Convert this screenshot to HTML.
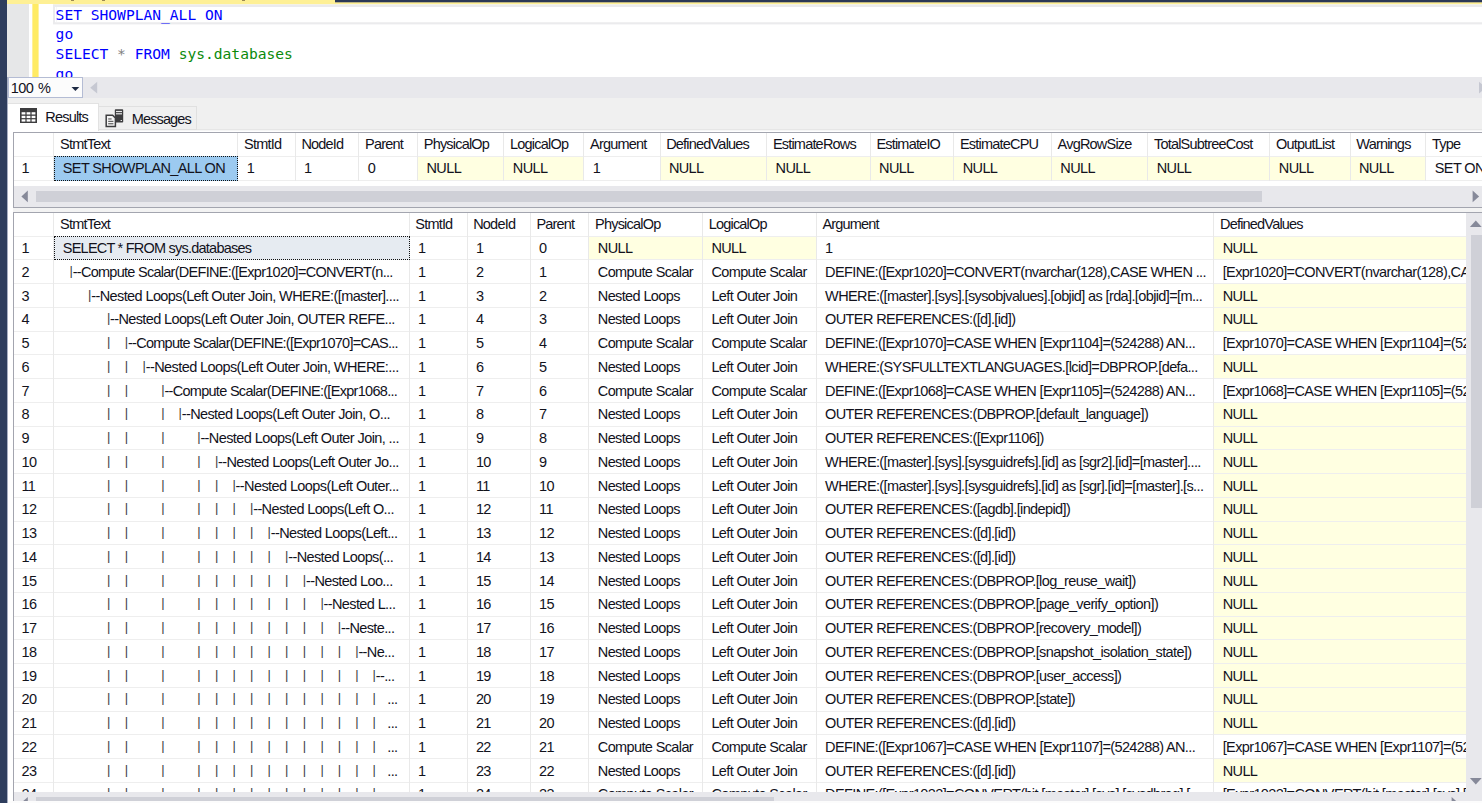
<!DOCTYPE html>
<html lang="en"><head><meta charset="utf-8"><title>SSMS - SHOWPLAN_ALL results</title>
<style>
html,body{margin:0;padding:0;}
body{width:1482px;height:803px;overflow:hidden;position:relative;background:#fff;
 font-family:"Liberation Sans",sans-serif;font-size:14.5px;letter-spacing:-0.62px;color:#12121c;}
div,span{position:absolute;box-sizing:border-box;white-space:pre;}
.navy{left:0;top:0;width:7px;height:803px;background:#2e3d5d;}
.navy2{left:7px;top:0;width:1px;height:803px;background:rgba(60,75,120,.45);}
.ytop{left:7px;top:0;width:1475px;height:4px;background:#fef095;}
.ntop{left:335px;top:0;width:1147px;height:3px;background:linear-gradient(#2b3856 0,#2b3856 2px,#bdb584 2px,#bdb584 3px);}
.ed{left:7px;top:4px;width:1475px;height:73px;background:#fff;overflow:hidden;}
.edm{left:0;top:0.3px;width:21.8px;height:100%;background:#e6e7e8;}
.edy{left:25px;top:0;width:7px;height:100%;background:linear-gradient(to right,#fff09a 0,#fff09a 1px,#ffeb64 1px,#ffeb64 6px,#fff2a2 6px);}
.cur{left:46px;top:0;width:1500px;height:21px;background:linear-gradient(#f4f2e4 0,#f4f2e4 1px,#ebebed 1px,#ebebed 3px,#fff 3px,#fff 18px,#f0f0f1 18px,#f0f0f1 19px,#ebebed 19px,#ebebed 20px,#f7f7f8 20px,#f7f7f8 21px);}
.cur i{position:absolute;left:3px;top:3px;width:1500px;height:15px;background:#fff;border-left:1px solid #f6f6f7;}
.cur b{position:absolute;left:0;top:1px;width:2px;height:19px;background:#ebebed;}
.code{left:48.6px;font-family:"DejaVu Sans Mono","Liberation Mono",monospace;font-size:14.6px;letter-spacing:0;line-height:20px;height:20px;color:#0000ff;}
.code .g{position:static;color:#808080;}
.code .s{position:static;color:#0a8a0a;}
.sb{background:#e8e8ec;}
.zoom{left:8px;top:77px;width:74.6px;height:20.6px;background:#fcfcfc;border:1px solid #b4bcd4;}
.zoom span{left:1.8px;top:1px;line-height:19.5px;font-size:14.5px;word-spacing:1.4px;}
.tri{width:0;height:0;border-style:solid;}
.bg{left:8px;top:98px;width:1474px;height:32px;background:#f0f0f0;}
.page{left:8px;top:130px;width:1474px;height:673px;background:#fff;}
.tabR{left:8px;top:103px;width:91px;height:28px;background:#fff;border:1px solid #e2e2e2;border-left:none;border-bottom:none;}
.tabM{left:98.3px;top:106.3px;width:98.5px;height:23.4px;background:#f0f0f0;border:1px solid #e0e0e0;}
.tabtxt{line-height:20px;height:20px;}
.grid{border:1px solid #a3a5af;background:#fff;overflow:hidden;}
.hl{height:1px;background:#eeeeee;left:0;width:1600px;}
.vl{width:1px;background:#e9e9e9;top:0;}
.h{line-height:23px;height:23px;top:0;letter-spacing:-0.8px;}
.c{line-height:24px;height:24px;}
.y{background:#ffffe1;}
.p{font-size:12.8px;color:#3a3a44;margin-top:-0.9px;}
</style></head><body>

<div class="navy"></div><div class="navy2"></div>
<div class="ytop"></div><div class="ntop"></div>
<div style="left:71px;top:0;width:3px;height:1px;background:rgba(90,70,40,.6)"></div>
<div style="left:102px;top:0;width:3px;height:1px;background:rgba(90,70,40,.6)"></div>
<div style="left:242px;top:0;width:3px;height:1px;background:rgba(90,70,40,.6)"></div>
<div class="ed"><div class="edm"></div><div class="edy"></div><div class="cur"><i></i><b></b></div>
<div class="code" style="top:0.6px">SET SHOWPLAN_ALL ON</div>
<div class="code" style="top:20.4px">go</div>
<div class="code" style="top:40.1px">SELECT <span class="g">*</span> FROM <span class="s">sys.databases</span></div>
<div class="code" style="top:59.9px">go</div>
</div>
<div class="sb" style="left:8px;top:77px;width:1474px;height:21px"></div>
<div class="zoom"><span>100 %</span></div><svg style="position:absolute;left:71px;top:87px" width="9" height="4"><polygon points="0.50,0.00 8.30,0.00 4.40,4.00" fill="#1e2a44"/></svg>
<svg style="position:absolute;left:90px;top:81px" width="8" height="13"><polygon points="7.20,0.80 7.20,12.50 0.20,6.65" fill="#c6c8d2"/></svg>
<svg style="position:absolute;left:1479px;top:81px" width="7" height="13"><polygon points="0.00,0.80 0.00,12.50 7.00,6.65" fill="#c6c8d2"/></svg>
<div class="bg"></div><div class="page"></div><div style="left:8px;top:129px;width:1474px;height:1px;background:#e6e6e6"></div><div style="left:8px;top:130px;width:1474px;height:1px;background:#f6f6f6"></div>
<div class="tabM"></div><div class="tabR"></div>
<svg style="position:absolute;left:20px;top:108px" width="17" height="15" viewBox="0 0 17 15">
<rect x="0" y="0" width="17" height="15" fill="#3d3d3f"/>
<g fill="#fff"><rect x="1.6" y="4.2" width="3.8" height="2.3"/><rect x="6.6" y="4.2" width="3.8" height="2.3"/><rect x="11.6" y="4.2" width="3.8" height="2.3"/>
<rect x="1.6" y="7.8" width="3.8" height="2.3"/><rect x="6.6" y="7.8" width="3.8" height="2.3"/><rect x="11.6" y="7.8" width="3.8" height="2.3"/>
<rect x="1.6" y="11.3" width="3.8" height="2.3"/><rect x="6.6" y="11.3" width="3.8" height="2.3"/><rect x="11.6" y="11.3" width="3.8" height="2.3"/></g></svg>
<span class="tabtxt" style="left:45.3px;top:107.2px;letter-spacing:-0.8px">Results</span>
<svg style="position:absolute;left:105px;top:109px" width="19" height="19" viewBox="0 0 19 19">
<rect x="9.8" y="0.3" width="8.4" height="13.2" rx="0.8" fill="#3d3d3f"/>
<rect x="11" y="1.9" width="6" height="1.2" fill="#e8e8e8"/><rect x="11" y="4.2" width="6" height="1.2" fill="#e8e8e8"/>
<rect x="15.6" y="11" width="1.4" height="1" fill="#e8e8e8"/>
<path d="M1.2 6.2 H7.6 L10.4 9 V17.6 H1.2 Z" fill="#f4f4f4" stroke="#3d3d3f" stroke-width="1.5"/>
<rect x="3.2" y="9.4" width="3.4" height="1.1" fill="#555"/><rect x="3.2" y="11.8" width="5.2" height="1.1" fill="#555"/><rect x="3.2" y="14.2" width="5.2" height="1.1" fill="#555"/></svg>
<span class="tabtxt" style="left:131.8px;top:109px;letter-spacing:-0.88px">Messages</span>
<div class="grid" style="left:13.2px;top:132px;width:1500px;height:76px">
<div class="y" style="left:404.0px;top:23.5px;width:85.3px;height:23.8px"></div>
<div class="y" style="left:490.3px;top:23.5px;width:79.0px;height:23.8px"></div>
<div class="y" style="left:646.4px;top:23.5px;width:105.7px;height:23.8px"></div>
<div class="y" style="left:753.1px;top:23.5px;width:102.5px;height:23.8px"></div>
<div class="y" style="left:856.6px;top:23.5px;width:82.6px;height:23.8px"></div>
<div class="y" style="left:940.2px;top:23.5px;width:96.6px;height:23.8px"></div>
<div class="y" style="left:1037.8px;top:23.5px;width:95.4px;height:23.8px"></div>
<div class="y" style="left:1134.2px;top:23.5px;width:121.1px;height:23.8px"></div>
<div class="y" style="left:1256.3px;top:23.5px;width:79.2px;height:23.8px"></div>
<div class="y" style="left:1336.5px;top:23.5px;width:74.8px;height:23.8px"></div>
<div class="hl" style="top:22.6px"></div>
<div class="hl" style="top:47.2px"></div>
<div class="vl" style="left:39.3px;height:47.7px"></div>
<div class="vl" style="left:223.3px;height:47.7px"></div>
<div class="vl" style="left:280.6px;height:47.7px"></div>
<div class="vl" style="left:344.3px;height:47.7px"></div>
<div class="vl" style="left:403.0px;height:47.7px"></div>
<div class="vl" style="left:489.3px;height:47.7px"></div>
<div class="vl" style="left:569.3px;height:47.7px"></div>
<div class="vl" style="left:645.4px;height:47.7px"></div>
<div class="vl" style="left:752.1px;height:47.7px"></div>
<div class="vl" style="left:855.6px;height:47.7px"></div>
<div class="vl" style="left:939.2px;height:47.7px"></div>
<div class="vl" style="left:1036.8px;height:47.7px"></div>
<div class="vl" style="left:1133.2px;height:47.7px"></div>
<div class="vl" style="left:1255.3px;height:47.7px"></div>
<div class="vl" style="left:1335.5px;height:47.7px"></div>
<div class="vl" style="left:1411.3px;height:47.7px"></div>
<div style="left:39.8px;top:22.6px;width:184.0px;height:25.2px;background:#9ccaf0;border:1px dotted #111"></div>
<span class="h" style="left:45.9px;top:0.3px">StmtText</span>
<span class="h" style="left:229.9px;top:0.3px">StmtId</span>
<span class="h" style="left:287.2px;top:0.3px">NodeId</span>
<span class="h" style="left:350.9px;top:0.3px">Parent</span>
<span class="h" style="left:409.6px;top:0.3px">PhysicalOp</span>
<span class="h" style="left:495.9px;top:0.3px">LogicalOp</span>
<span class="h" style="left:575.9px;top:0.3px">Argument</span>
<span class="h" style="left:652.0px;top:0.3px">DefinedValues</span>
<span class="h" style="left:758.7px;top:0.3px">EstimateRows</span>
<span class="h" style="left:862.2px;top:0.3px">EstimateIO</span>
<span class="h" style="left:945.8px;top:0.3px">EstimateCPU</span>
<span class="h" style="left:1043.4px;top:0.3px">AvgRowSize</span>
<span class="h" style="left:1139.8px;top:0.3px">TotalSubtreeCost</span>
<span class="h" style="left:1261.9px;top:0.3px">OutputList</span>
<span class="h" style="left:1342.1px;top:0.3px">Warnings</span>
<span class="h" style="left:1417.9px;top:0.3px">Type</span>
<span class="c" style="left:7.3px;top:23.0px">1</span>
<span class="c" style="left:48.6px;top:23.0px">SET SHOWPLAN_ALL ON</span>
<span class="c" style="left:232.6px;top:23.0px">1</span>
<span class="c" style="left:289.9px;top:23.0px">1</span>
<span class="c" style="left:353.6px;top:23.0px">0</span>
<span class="c" style="left:412.3px;top:23.0px">NULL</span>
<span class="c" style="left:498.6px;top:23.0px">NULL</span>
<span class="c" style="left:578.6px;top:23.0px">1</span>
<span class="c" style="left:654.7px;top:23.0px">NULL</span>
<span class="c" style="left:761.4px;top:23.0px">NULL</span>
<span class="c" style="left:864.9px;top:23.0px">NULL</span>
<span class="c" style="left:948.5px;top:23.0px">NULL</span>
<span class="c" style="left:1046.1px;top:23.0px">NULL</span>
<span class="c" style="left:1142.5px;top:23.0px">NULL</span>
<span class="c" style="left:1264.6px;top:23.0px">NULL</span>
<span class="c" style="left:1344.8px;top:23.0px">NULL</span>
<span class="c" style="left:1420.6px;top:23.0px">SET ON</span>
<div class="sb" style="left:0;top:53.0px;width:1600px;height:21px"></div>
<svg style="position:absolute;left:7px;top:57px" width="7" height="13"><polygon points="6.80,0.60 6.80,12.20 0.40,6.40" fill="#868999"/></svg>
<div style="left:21.4px;top:58.0px;width:1226.0px;height:10.6px;background:#cfd0d7"></div>
<svg style="position:absolute;left:1458px;top:57px" width="8" height="13"><polygon points="0.60,0.60 0.60,12.20 7.10,6.40" fill="#868999"/></svg>
</div>
<div style="left:13.2px;top:208px;width:1500px;height:4px;background:#f3f3f3"></div>
<div class="grid" style="left:13.2px;top:212px;width:1500px;height:620px">
<div class="y" style="left:575.3px;top:23.50px;width:112.6px;height:23.35px"></div>
<div class="y" style="left:688.9px;top:23.50px;width:112.7px;height:23.35px"></div>
<div class="y" style="left:1200.2px;top:23.50px;width:485.6px;height:23.35px"></div>
<div class="y" style="left:1200.2px;top:71.00px;width:485.6px;height:23.35px"></div>
<div class="y" style="left:1200.2px;top:94.75px;width:485.6px;height:23.35px"></div>
<div class="y" style="left:1200.2px;top:142.25px;width:485.6px;height:23.35px"></div>
<div class="y" style="left:1200.2px;top:189.75px;width:485.6px;height:23.35px"></div>
<div class="y" style="left:1200.2px;top:213.50px;width:485.6px;height:23.35px"></div>
<div class="y" style="left:1200.2px;top:237.25px;width:485.6px;height:23.35px"></div>
<div class="y" style="left:1200.2px;top:261.00px;width:485.6px;height:23.35px"></div>
<div class="y" style="left:1200.2px;top:284.75px;width:485.6px;height:23.35px"></div>
<div class="y" style="left:1200.2px;top:308.50px;width:485.6px;height:23.35px"></div>
<div class="y" style="left:1200.2px;top:332.25px;width:485.6px;height:23.35px"></div>
<div class="y" style="left:1200.2px;top:356.00px;width:485.6px;height:23.35px"></div>
<div class="y" style="left:1200.2px;top:379.75px;width:485.6px;height:23.35px"></div>
<div class="y" style="left:1200.2px;top:403.50px;width:485.6px;height:23.35px"></div>
<div class="y" style="left:1200.2px;top:427.25px;width:485.6px;height:23.35px"></div>
<div class="y" style="left:1200.2px;top:451.00px;width:485.6px;height:23.35px"></div>
<div class="y" style="left:1200.2px;top:474.75px;width:485.6px;height:23.35px"></div>
<div class="y" style="left:1200.2px;top:498.50px;width:485.6px;height:23.35px"></div>
<div class="y" style="left:1200.2px;top:546.00px;width:485.6px;height:23.35px"></div>
<div class="hl" style="top:22.5px"></div>
<div class="hl" style="top:46.35px"></div>
<div class="hl" style="top:70.10px"></div>
<div class="hl" style="top:93.85px"></div>
<div class="hl" style="top:117.60px"></div>
<div class="hl" style="top:141.35px"></div>
<div class="hl" style="top:165.10px"></div>
<div class="hl" style="top:188.85px"></div>
<div class="hl" style="top:212.60px"></div>
<div class="hl" style="top:236.35px"></div>
<div class="hl" style="top:260.10px"></div>
<div class="hl" style="top:283.85px"></div>
<div class="hl" style="top:307.60px"></div>
<div class="hl" style="top:331.35px"></div>
<div class="hl" style="top:355.10px"></div>
<div class="hl" style="top:378.85px"></div>
<div class="hl" style="top:402.60px"></div>
<div class="hl" style="top:426.35px"></div>
<div class="hl" style="top:450.10px"></div>
<div class="hl" style="top:473.85px"></div>
<div class="hl" style="top:497.60px"></div>
<div class="hl" style="top:521.35px"></div>
<div class="hl" style="top:545.10px"></div>
<div class="hl" style="top:568.85px"></div>
<div class="hl" style="top:592.60px"></div>
<div class="vl" style="left:39.3px;height:700px"></div>
<div class="vl" style="left:394.5px;height:700px"></div>
<div class="vl" style="left:452.4px;height:700px"></div>
<div class="vl" style="left:515.6px;height:700px"></div>
<div class="vl" style="left:574.3px;height:700px"></div>
<div class="vl" style="left:687.9px;height:700px"></div>
<div class="vl" style="left:801.6px;height:700px"></div>
<div class="vl" style="left:1199.2px;height:700px"></div>
<div style="left:39.8px;top:22.8px;width:355.6px;height:24.7px;background:#e6ebf1;border:1px dotted #111"></div>
<span class="h" style="left:45.9px;top:0.3px">StmtText</span>
<span class="h" style="left:401.1px;top:0.3px">StmtId</span>
<span class="h" style="left:459.0px;top:0.3px">NodeId</span>
<span class="h" style="left:522.2px;top:0.3px">Parent</span>
<span class="h" style="left:580.9px;top:0.3px">PhysicalOp</span>
<span class="h" style="left:694.5px;top:0.3px">LogicalOp</span>
<span class="h" style="left:808.2px;top:0.3px">Argument</span>
<span class="h" style="left:1205.8px;top:0.3px">DefinedValues</span>
<span class="c" style="left:7.3px;top:23.00px">1</span>
<span class="c" style="left:48.6px;top:23.00px;letter-spacing:-0.77px">SELECT * FROM sys.databases</span>
<span class="c" style="left:403.8px;top:23.00px">1</span>
<span class="c" style="left:461.7px;top:23.00px">1</span>
<span class="c" style="left:524.9px;top:23.00px">0</span>
<span class="c" style="left:583.6px;top:23.00px">NULL</span>
<span class="c" style="left:697.2px;top:23.00px">NULL</span>
<span class="c" style="left:810.9px;top:23.00px">1</span>
<span class="c" style="left:1208.5px;top:23.00px">NULL</span>
<span class="c" style="left:7.3px;top:46.75px">2</span>
<span class="c p" style="left:55.3px;top:46.75px">|</span>
<span class="c" style="left:58.5px;top:46.75px;letter-spacing:-0.725px">--Compute Scalar(DEFINE:([Expr1020]=CONVERT(n...</span>
<span class="c" style="left:403.8px;top:46.75px">1</span>
<span class="c" style="left:461.7px;top:46.75px">2</span>
<span class="c" style="left:524.9px;top:46.75px">1</span>
<span class="c" style="left:583.6px;top:46.75px">Compute Scalar</span>
<span class="c" style="left:697.2px;top:46.75px">Compute Scalar</span>
<span class="c" style="left:810.9px;top:46.75px">DEFINE:([Expr1020]=CONVERT(nvarchar(128),CASE WHEN ...</span>
<span class="c" style="left:1208.5px;top:46.75px">[Expr1020]=CONVERT(nvarchar(128),CASE WHEN</span>
<span class="c" style="left:7.3px;top:70.50px">3</span>
<span class="c p" style="left:73.8px;top:70.50px">|</span>
<span class="c" style="left:77.0px;top:70.50px;letter-spacing:-0.600px">--Nested Loops(Left Outer Join, WHERE:([master]....</span>
<span class="c" style="left:403.8px;top:70.50px">1</span>
<span class="c" style="left:461.7px;top:70.50px">3</span>
<span class="c" style="left:524.9px;top:70.50px">2</span>
<span class="c" style="left:583.6px;top:70.50px">Nested Loops</span>
<span class="c" style="left:697.2px;top:70.50px">Left Outer Join</span>
<span class="c" style="left:810.9px;top:70.50px">WHERE:([master].[sys].[sysobjvalues].[objid] as [rda].[objid]=[m...</span>
<span class="c" style="left:1208.5px;top:70.50px">NULL</span>
<span class="c" style="left:7.3px;top:94.25px">4</span>
<span class="c p" style="left:92.7px;top:94.25px">|</span>
<span class="c" style="left:95.8px;top:94.25px;letter-spacing:-0.620px">--Nested Loops(Left Outer Join, OUTER REFE...</span>
<span class="c" style="left:403.8px;top:94.25px">1</span>
<span class="c" style="left:461.7px;top:94.25px">4</span>
<span class="c" style="left:524.9px;top:94.25px">3</span>
<span class="c" style="left:583.6px;top:94.25px">Nested Loops</span>
<span class="c" style="left:697.2px;top:94.25px">Left Outer Join</span>
<span class="c" style="left:810.9px;top:94.25px">OUTER REFERENCES:([d].[id])</span>
<span class="c" style="left:1208.5px;top:94.25px">NULL</span>
<span class="c" style="left:7.3px;top:118.00px">5</span>
<span class="c p" style="left:92.7px;top:118.00px">|</span>
<span class="c p" style="left:110.6px;top:118.00px">|</span>
<span class="c" style="left:113.8px;top:118.00px;letter-spacing:-0.740px">--Compute Scalar(DEFINE:([Expr1070]=CAS...</span>
<span class="c" style="left:403.8px;top:118.00px">1</span>
<span class="c" style="left:461.7px;top:118.00px">5</span>
<span class="c" style="left:524.9px;top:118.00px">4</span>
<span class="c" style="left:583.6px;top:118.00px">Compute Scalar</span>
<span class="c" style="left:697.2px;top:118.00px">Compute Scalar</span>
<span class="c" style="left:810.9px;top:118.00px">DEFINE:([Expr1070]=CASE WHEN [Expr1104]=(524288) AN...</span>
<span class="c" style="left:1208.5px;top:118.00px">[Expr1070]=CASE WHEN [Expr1104]=(524288)</span>
<span class="c" style="left:7.3px;top:141.75px">6</span>
<span class="c p" style="left:92.7px;top:141.75px">|</span>
<span class="c p" style="left:110.6px;top:141.75px">|</span>
<span class="c p" style="left:128.4px;top:141.75px">|</span>
<span class="c" style="left:131.6px;top:141.75px;letter-spacing:-0.595px">--Nested Loops(Left Outer Join, WHERE:...</span>
<span class="c" style="left:403.8px;top:141.75px">1</span>
<span class="c" style="left:461.7px;top:141.75px">6</span>
<span class="c" style="left:524.9px;top:141.75px">5</span>
<span class="c" style="left:583.6px;top:141.75px">Nested Loops</span>
<span class="c" style="left:697.2px;top:141.75px">Left Outer Join</span>
<span class="c" style="left:810.9px;top:141.75px">WHERE:(SYSFULLTEXTLANGUAGES.[lcid]=DBPROP.[defa...</span>
<span class="c" style="left:1208.5px;top:141.75px">NULL</span>
<span class="c" style="left:7.3px;top:165.50px">7</span>
<span class="c p" style="left:92.7px;top:165.50px">|</span>
<span class="c p" style="left:110.6px;top:165.50px">|</span>
<span class="c p" style="left:147.0px;top:165.50px">|</span>
<span class="c" style="left:150.2px;top:165.50px;letter-spacing:-0.700px">--Compute Scalar(DEFINE:([Expr1068...</span>
<span class="c" style="left:403.8px;top:165.50px">1</span>
<span class="c" style="left:461.7px;top:165.50px">7</span>
<span class="c" style="left:524.9px;top:165.50px">6</span>
<span class="c" style="left:583.6px;top:165.50px">Compute Scalar</span>
<span class="c" style="left:697.2px;top:165.50px">Compute Scalar</span>
<span class="c" style="left:810.9px;top:165.50px">DEFINE:([Expr1068]=CASE WHEN [Expr1105]=(524288) AN...</span>
<span class="c" style="left:1208.5px;top:165.50px">[Expr1068]=CASE WHEN [Expr1105]=(524288)</span>
<span class="c" style="left:7.3px;top:189.25px">8</span>
<span class="c p" style="left:92.7px;top:189.25px">|</span>
<span class="c p" style="left:110.6px;top:189.25px">|</span>
<span class="c p" style="left:147.0px;top:189.25px">|</span>
<span class="c p" style="left:164.4px;top:189.25px">|</span>
<span class="c" style="left:167.6px;top:189.25px;letter-spacing:-0.620px">--Nested Loops(Left Outer Join, O...</span>
<span class="c" style="left:403.8px;top:189.25px">1</span>
<span class="c" style="left:461.7px;top:189.25px">8</span>
<span class="c" style="left:524.9px;top:189.25px">7</span>
<span class="c" style="left:583.6px;top:189.25px">Nested Loops</span>
<span class="c" style="left:697.2px;top:189.25px">Left Outer Join</span>
<span class="c" style="left:810.9px;top:189.25px">OUTER REFERENCES:(DBPROP.[default_language])</span>
<span class="c" style="left:1208.5px;top:189.25px">NULL</span>
<span class="c" style="left:7.3px;top:213.00px">9</span>
<span class="c p" style="left:92.7px;top:213.00px">|</span>
<span class="c p" style="left:110.6px;top:213.00px">|</span>
<span class="c p" style="left:147.0px;top:213.00px">|</span>
<span class="c p" style="left:183.1px;top:213.00px">|</span>
<span class="c" style="left:186.2px;top:213.00px;letter-spacing:-0.590px">--Nested Loops(Left Outer Join, ...</span>
<span class="c" style="left:403.8px;top:213.00px">1</span>
<span class="c" style="left:461.7px;top:213.00px">9</span>
<span class="c" style="left:524.9px;top:213.00px">8</span>
<span class="c" style="left:583.6px;top:213.00px">Nested Loops</span>
<span class="c" style="left:697.2px;top:213.00px">Left Outer Join</span>
<span class="c" style="left:810.9px;top:213.00px">OUTER REFERENCES:([Expr1106])</span>
<span class="c" style="left:1208.5px;top:213.00px">NULL</span>
<span class="c" style="left:7.3px;top:236.75px">10</span>
<span class="c p" style="left:92.7px;top:236.75px">|</span>
<span class="c p" style="left:110.6px;top:236.75px">|</span>
<span class="c p" style="left:147.0px;top:236.75px">|</span>
<span class="c p" style="left:183.1px;top:236.75px">|</span>
<span class="c p" style="left:200.7px;top:236.75px">|</span>
<span class="c" style="left:203.9px;top:236.75px;letter-spacing:-0.620px">--Nested Loops(Left Outer Jo...</span>
<span class="c" style="left:403.8px;top:236.75px">1</span>
<span class="c" style="left:461.7px;top:236.75px">10</span>
<span class="c" style="left:524.9px;top:236.75px">9</span>
<span class="c" style="left:583.6px;top:236.75px">Nested Loops</span>
<span class="c" style="left:697.2px;top:236.75px">Left Outer Join</span>
<span class="c" style="left:810.9px;top:236.75px">WHERE:([master].[sys].[sysguidrefs].[id] as [sgr2].[id]=[master]....</span>
<span class="c" style="left:1208.5px;top:236.75px">NULL</span>
<span class="c" style="left:7.3px;top:260.50px">11</span>
<span class="c p" style="left:92.7px;top:260.50px">|</span>
<span class="c p" style="left:110.6px;top:260.50px">|</span>
<span class="c p" style="left:147.0px;top:260.50px">|</span>
<span class="c p" style="left:183.1px;top:260.50px">|</span>
<span class="c p" style="left:200.7px;top:260.50px">|</span>
<span class="c p" style="left:218.2px;top:260.50px">|</span>
<span class="c" style="left:221.4px;top:260.50px;letter-spacing:-0.590px">--Nested Loops(Left Outer...</span>
<span class="c" style="left:403.8px;top:260.50px">1</span>
<span class="c" style="left:461.7px;top:260.50px">11</span>
<span class="c" style="left:524.9px;top:260.50px">10</span>
<span class="c" style="left:583.6px;top:260.50px">Nested Loops</span>
<span class="c" style="left:697.2px;top:260.50px">Left Outer Join</span>
<span class="c" style="left:810.9px;top:260.50px">WHERE:([master].[sys].[sysguidrefs].[id] as [sgr].[id]=[master].[s...</span>
<span class="c" style="left:1208.5px;top:260.50px">NULL</span>
<span class="c" style="left:7.3px;top:284.25px">12</span>
<span class="c p" style="left:92.7px;top:284.25px">|</span>
<span class="c p" style="left:110.6px;top:284.25px">|</span>
<span class="c p" style="left:147.0px;top:284.25px">|</span>
<span class="c p" style="left:183.1px;top:284.25px">|</span>
<span class="c p" style="left:200.7px;top:284.25px">|</span>
<span class="c p" style="left:218.2px;top:284.25px">|</span>
<span class="c p" style="left:235.8px;top:284.25px">|</span>
<span class="c" style="left:239.0px;top:284.25px;letter-spacing:-0.620px">--Nested Loops(Left O...</span>
<span class="c" style="left:403.8px;top:284.25px">1</span>
<span class="c" style="left:461.7px;top:284.25px">12</span>
<span class="c" style="left:524.9px;top:284.25px">11</span>
<span class="c" style="left:583.6px;top:284.25px">Nested Loops</span>
<span class="c" style="left:697.2px;top:284.25px">Left Outer Join</span>
<span class="c" style="left:810.9px;top:284.25px">OUTER REFERENCES:([agdb].[indepid])</span>
<span class="c" style="left:1208.5px;top:284.25px">NULL</span>
<span class="c" style="left:7.3px;top:308.00px">13</span>
<span class="c p" style="left:92.7px;top:308.00px">|</span>
<span class="c p" style="left:110.6px;top:308.00px">|</span>
<span class="c p" style="left:147.0px;top:308.00px">|</span>
<span class="c p" style="left:183.1px;top:308.00px">|</span>
<span class="c p" style="left:200.7px;top:308.00px">|</span>
<span class="c p" style="left:218.2px;top:308.00px">|</span>
<span class="c p" style="left:235.8px;top:308.00px">|</span>
<span class="c p" style="left:253.4px;top:308.00px">|</span>
<span class="c" style="left:256.6px;top:308.00px;letter-spacing:-0.620px">--Nested Loops(Left...</span>
<span class="c" style="left:403.8px;top:308.00px">1</span>
<span class="c" style="left:461.7px;top:308.00px">13</span>
<span class="c" style="left:524.9px;top:308.00px">12</span>
<span class="c" style="left:583.6px;top:308.00px">Nested Loops</span>
<span class="c" style="left:697.2px;top:308.00px">Left Outer Join</span>
<span class="c" style="left:810.9px;top:308.00px">OUTER REFERENCES:([d].[id])</span>
<span class="c" style="left:1208.5px;top:308.00px">NULL</span>
<span class="c" style="left:7.3px;top:331.75px">14</span>
<span class="c p" style="left:92.7px;top:331.75px">|</span>
<span class="c p" style="left:110.6px;top:331.75px">|</span>
<span class="c p" style="left:147.0px;top:331.75px">|</span>
<span class="c p" style="left:183.1px;top:331.75px">|</span>
<span class="c p" style="left:200.7px;top:331.75px">|</span>
<span class="c p" style="left:218.2px;top:331.75px">|</span>
<span class="c p" style="left:235.8px;top:331.75px">|</span>
<span class="c p" style="left:253.4px;top:331.75px">|</span>
<span class="c p" style="left:270.9px;top:331.75px">|</span>
<span class="c" style="left:274.1px;top:331.75px;letter-spacing:-0.620px">--Nested Loops(...</span>
<span class="c" style="left:403.8px;top:331.75px">1</span>
<span class="c" style="left:461.7px;top:331.75px">14</span>
<span class="c" style="left:524.9px;top:331.75px">13</span>
<span class="c" style="left:583.6px;top:331.75px">Nested Loops</span>
<span class="c" style="left:697.2px;top:331.75px">Left Outer Join</span>
<span class="c" style="left:810.9px;top:331.75px">OUTER REFERENCES:([d].[id])</span>
<span class="c" style="left:1208.5px;top:331.75px">NULL</span>
<span class="c" style="left:7.3px;top:355.50px">15</span>
<span class="c p" style="left:92.7px;top:355.50px">|</span>
<span class="c p" style="left:110.6px;top:355.50px">|</span>
<span class="c p" style="left:147.0px;top:355.50px">|</span>
<span class="c p" style="left:183.1px;top:355.50px">|</span>
<span class="c p" style="left:200.7px;top:355.50px">|</span>
<span class="c p" style="left:218.2px;top:355.50px">|</span>
<span class="c p" style="left:235.8px;top:355.50px">|</span>
<span class="c p" style="left:253.4px;top:355.50px">|</span>
<span class="c p" style="left:270.9px;top:355.50px">|</span>
<span class="c p" style="left:288.6px;top:355.50px">|</span>
<span class="c" style="left:291.8px;top:355.50px;letter-spacing:-0.620px">--Nested Loo...</span>
<span class="c" style="left:403.8px;top:355.50px">1</span>
<span class="c" style="left:461.7px;top:355.50px">15</span>
<span class="c" style="left:524.9px;top:355.50px">14</span>
<span class="c" style="left:583.6px;top:355.50px">Nested Loops</span>
<span class="c" style="left:697.2px;top:355.50px">Left Outer Join</span>
<span class="c" style="left:810.9px;top:355.50px">OUTER REFERENCES:(DBPROP.[log_reuse_wait])</span>
<span class="c" style="left:1208.5px;top:355.50px">NULL</span>
<span class="c" style="left:7.3px;top:379.25px">16</span>
<span class="c p" style="left:92.7px;top:379.25px">|</span>
<span class="c p" style="left:110.6px;top:379.25px">|</span>
<span class="c p" style="left:147.0px;top:379.25px">|</span>
<span class="c p" style="left:183.1px;top:379.25px">|</span>
<span class="c p" style="left:200.7px;top:379.25px">|</span>
<span class="c p" style="left:218.2px;top:379.25px">|</span>
<span class="c p" style="left:235.8px;top:379.25px">|</span>
<span class="c p" style="left:253.4px;top:379.25px">|</span>
<span class="c p" style="left:270.9px;top:379.25px">|</span>
<span class="c p" style="left:288.6px;top:379.25px">|</span>
<span class="c p" style="left:306.2px;top:379.25px">|</span>
<span class="c" style="left:309.4px;top:379.25px;letter-spacing:-0.620px">--Nested L...</span>
<span class="c" style="left:403.8px;top:379.25px">1</span>
<span class="c" style="left:461.7px;top:379.25px">16</span>
<span class="c" style="left:524.9px;top:379.25px">15</span>
<span class="c" style="left:583.6px;top:379.25px">Nested Loops</span>
<span class="c" style="left:697.2px;top:379.25px">Left Outer Join</span>
<span class="c" style="left:810.9px;top:379.25px">OUTER REFERENCES:(DBPROP.[page_verify_option])</span>
<span class="c" style="left:1208.5px;top:379.25px">NULL</span>
<span class="c" style="left:7.3px;top:403.00px">17</span>
<span class="c p" style="left:92.7px;top:403.00px">|</span>
<span class="c p" style="left:110.6px;top:403.00px">|</span>
<span class="c p" style="left:147.0px;top:403.00px">|</span>
<span class="c p" style="left:183.1px;top:403.00px">|</span>
<span class="c p" style="left:200.7px;top:403.00px">|</span>
<span class="c p" style="left:218.2px;top:403.00px">|</span>
<span class="c p" style="left:235.8px;top:403.00px">|</span>
<span class="c p" style="left:253.4px;top:403.00px">|</span>
<span class="c p" style="left:270.9px;top:403.00px">|</span>
<span class="c p" style="left:288.6px;top:403.00px">|</span>
<span class="c p" style="left:306.2px;top:403.00px">|</span>
<span class="c p" style="left:323.6px;top:403.00px">|</span>
<span class="c" style="left:326.8px;top:403.00px;letter-spacing:-0.620px">--Neste...</span>
<span class="c" style="left:403.8px;top:403.00px">1</span>
<span class="c" style="left:461.7px;top:403.00px">17</span>
<span class="c" style="left:524.9px;top:403.00px">16</span>
<span class="c" style="left:583.6px;top:403.00px">Nested Loops</span>
<span class="c" style="left:697.2px;top:403.00px">Left Outer Join</span>
<span class="c" style="left:810.9px;top:403.00px">OUTER REFERENCES:(DBPROP.[recovery_model])</span>
<span class="c" style="left:1208.5px;top:403.00px">NULL</span>
<span class="c" style="left:7.3px;top:426.75px">18</span>
<span class="c p" style="left:92.7px;top:426.75px">|</span>
<span class="c p" style="left:110.6px;top:426.75px">|</span>
<span class="c p" style="left:147.0px;top:426.75px">|</span>
<span class="c p" style="left:183.1px;top:426.75px">|</span>
<span class="c p" style="left:200.7px;top:426.75px">|</span>
<span class="c p" style="left:218.2px;top:426.75px">|</span>
<span class="c p" style="left:235.8px;top:426.75px">|</span>
<span class="c p" style="left:253.4px;top:426.75px">|</span>
<span class="c p" style="left:270.9px;top:426.75px">|</span>
<span class="c p" style="left:288.6px;top:426.75px">|</span>
<span class="c p" style="left:306.2px;top:426.75px">|</span>
<span class="c p" style="left:323.6px;top:426.75px">|</span>
<span class="c p" style="left:341.1px;top:426.75px">|</span>
<span class="c" style="left:344.2px;top:426.75px;letter-spacing:-0.620px">--Ne...</span>
<span class="c" style="left:403.8px;top:426.75px">1</span>
<span class="c" style="left:461.7px;top:426.75px">18</span>
<span class="c" style="left:524.9px;top:426.75px">17</span>
<span class="c" style="left:583.6px;top:426.75px">Nested Loops</span>
<span class="c" style="left:697.2px;top:426.75px">Left Outer Join</span>
<span class="c" style="left:810.9px;top:426.75px">OUTER REFERENCES:(DBPROP.[snapshot_isolation_state])</span>
<span class="c" style="left:1208.5px;top:426.75px">NULL</span>
<span class="c" style="left:7.3px;top:450.50px">19</span>
<span class="c p" style="left:92.7px;top:450.50px">|</span>
<span class="c p" style="left:110.6px;top:450.50px">|</span>
<span class="c p" style="left:147.0px;top:450.50px">|</span>
<span class="c p" style="left:183.1px;top:450.50px">|</span>
<span class="c p" style="left:200.7px;top:450.50px">|</span>
<span class="c p" style="left:218.2px;top:450.50px">|</span>
<span class="c p" style="left:235.8px;top:450.50px">|</span>
<span class="c p" style="left:253.4px;top:450.50px">|</span>
<span class="c p" style="left:270.9px;top:450.50px">|</span>
<span class="c p" style="left:288.6px;top:450.50px">|</span>
<span class="c p" style="left:306.2px;top:450.50px">|</span>
<span class="c p" style="left:323.6px;top:450.50px">|</span>
<span class="c p" style="left:341.1px;top:450.50px">|</span>
<span class="c p" style="left:358.4px;top:450.50px">|</span>
<span class="c" style="left:361.6px;top:450.50px;letter-spacing:-0.620px">--...</span>
<span class="c" style="left:403.8px;top:450.50px">1</span>
<span class="c" style="left:461.7px;top:450.50px">19</span>
<span class="c" style="left:524.9px;top:450.50px">18</span>
<span class="c" style="left:583.6px;top:450.50px">Nested Loops</span>
<span class="c" style="left:697.2px;top:450.50px">Left Outer Join</span>
<span class="c" style="left:810.9px;top:450.50px">OUTER REFERENCES:(DBPROP.[user_access])</span>
<span class="c" style="left:1208.5px;top:450.50px">NULL</span>
<span class="c" style="left:7.3px;top:474.25px">20</span>
<span class="c p" style="left:92.7px;top:474.25px">|</span>
<span class="c p" style="left:110.6px;top:474.25px">|</span>
<span class="c p" style="left:147.0px;top:474.25px">|</span>
<span class="c p" style="left:183.1px;top:474.25px">|</span>
<span class="c p" style="left:200.7px;top:474.25px">|</span>
<span class="c p" style="left:218.2px;top:474.25px">|</span>
<span class="c p" style="left:235.8px;top:474.25px">|</span>
<span class="c p" style="left:253.4px;top:474.25px">|</span>
<span class="c p" style="left:270.9px;top:474.25px">|</span>
<span class="c p" style="left:288.6px;top:474.25px">|</span>
<span class="c p" style="left:306.2px;top:474.25px">|</span>
<span class="c p" style="left:323.6px;top:474.25px">|</span>
<span class="c p" style="left:341.1px;top:474.25px">|</span>
<span class="c p" style="left:358.4px;top:474.25px">|</span>
<span class="c" style="left:373.1px;top:474.25px">...</span>
<span class="c" style="left:403.8px;top:474.25px">1</span>
<span class="c" style="left:461.7px;top:474.25px">20</span>
<span class="c" style="left:524.9px;top:474.25px">19</span>
<span class="c" style="left:583.6px;top:474.25px">Nested Loops</span>
<span class="c" style="left:697.2px;top:474.25px">Left Outer Join</span>
<span class="c" style="left:810.9px;top:474.25px">OUTER REFERENCES:(DBPROP.[state])</span>
<span class="c" style="left:1208.5px;top:474.25px">NULL</span>
<span class="c" style="left:7.3px;top:498.00px">21</span>
<span class="c p" style="left:92.7px;top:498.00px">|</span>
<span class="c p" style="left:110.6px;top:498.00px">|</span>
<span class="c p" style="left:147.0px;top:498.00px">|</span>
<span class="c p" style="left:183.1px;top:498.00px">|</span>
<span class="c p" style="left:200.7px;top:498.00px">|</span>
<span class="c p" style="left:218.2px;top:498.00px">|</span>
<span class="c p" style="left:235.8px;top:498.00px">|</span>
<span class="c p" style="left:253.4px;top:498.00px">|</span>
<span class="c p" style="left:270.9px;top:498.00px">|</span>
<span class="c p" style="left:288.6px;top:498.00px">|</span>
<span class="c p" style="left:306.2px;top:498.00px">|</span>
<span class="c p" style="left:323.6px;top:498.00px">|</span>
<span class="c p" style="left:341.1px;top:498.00px">|</span>
<span class="c p" style="left:358.4px;top:498.00px">|</span>
<span class="c" style="left:373.1px;top:498.00px">...</span>
<span class="c" style="left:403.8px;top:498.00px">1</span>
<span class="c" style="left:461.7px;top:498.00px">21</span>
<span class="c" style="left:524.9px;top:498.00px">20</span>
<span class="c" style="left:583.6px;top:498.00px">Nested Loops</span>
<span class="c" style="left:697.2px;top:498.00px">Left Outer Join</span>
<span class="c" style="left:810.9px;top:498.00px">OUTER REFERENCES:([d].[id])</span>
<span class="c" style="left:1208.5px;top:498.00px">NULL</span>
<span class="c" style="left:7.3px;top:521.75px">22</span>
<span class="c p" style="left:92.7px;top:521.75px">|</span>
<span class="c p" style="left:110.6px;top:521.75px">|</span>
<span class="c p" style="left:147.0px;top:521.75px">|</span>
<span class="c p" style="left:183.1px;top:521.75px">|</span>
<span class="c p" style="left:200.7px;top:521.75px">|</span>
<span class="c p" style="left:218.2px;top:521.75px">|</span>
<span class="c p" style="left:235.8px;top:521.75px">|</span>
<span class="c p" style="left:253.4px;top:521.75px">|</span>
<span class="c p" style="left:270.9px;top:521.75px">|</span>
<span class="c p" style="left:288.6px;top:521.75px">|</span>
<span class="c p" style="left:306.2px;top:521.75px">|</span>
<span class="c p" style="left:323.6px;top:521.75px">|</span>
<span class="c p" style="left:341.1px;top:521.75px">|</span>
<span class="c p" style="left:358.4px;top:521.75px">|</span>
<span class="c" style="left:373.1px;top:521.75px">...</span>
<span class="c" style="left:403.8px;top:521.75px">1</span>
<span class="c" style="left:461.7px;top:521.75px">22</span>
<span class="c" style="left:524.9px;top:521.75px">21</span>
<span class="c" style="left:583.6px;top:521.75px">Compute Scalar</span>
<span class="c" style="left:697.2px;top:521.75px">Compute Scalar</span>
<span class="c" style="left:810.9px;top:521.75px">DEFINE:([Expr1067]=CASE WHEN [Expr1107]=(524288) AN...</span>
<span class="c" style="left:1208.5px;top:521.75px">[Expr1067]=CASE WHEN [Expr1107]=(524288)</span>
<span class="c" style="left:7.3px;top:545.50px">23</span>
<span class="c p" style="left:92.7px;top:545.50px">|</span>
<span class="c p" style="left:110.6px;top:545.50px">|</span>
<span class="c p" style="left:147.0px;top:545.50px">|</span>
<span class="c p" style="left:183.1px;top:545.50px">|</span>
<span class="c p" style="left:200.7px;top:545.50px">|</span>
<span class="c p" style="left:218.2px;top:545.50px">|</span>
<span class="c p" style="left:235.8px;top:545.50px">|</span>
<span class="c p" style="left:253.4px;top:545.50px">|</span>
<span class="c p" style="left:270.9px;top:545.50px">|</span>
<span class="c p" style="left:288.6px;top:545.50px">|</span>
<span class="c p" style="left:306.2px;top:545.50px">|</span>
<span class="c p" style="left:323.6px;top:545.50px">|</span>
<span class="c p" style="left:341.1px;top:545.50px">|</span>
<span class="c p" style="left:358.4px;top:545.50px">|</span>
<span class="c" style="left:373.1px;top:545.50px">...</span>
<span class="c" style="left:403.8px;top:545.50px">1</span>
<span class="c" style="left:461.7px;top:545.50px">23</span>
<span class="c" style="left:524.9px;top:545.50px">22</span>
<span class="c" style="left:583.6px;top:545.50px">Nested Loops</span>
<span class="c" style="left:697.2px;top:545.50px">Left Outer Join</span>
<span class="c" style="left:810.9px;top:545.50px">OUTER REFERENCES:([d].[id])</span>
<span class="c" style="left:1208.5px;top:545.50px">NULL</span>
<span class="c" style="left:7.3px;top:569.25px">24</span>
<span class="c p" style="left:92.7px;top:569.25px">|</span>
<span class="c p" style="left:110.6px;top:569.25px">|</span>
<span class="c p" style="left:147.0px;top:569.25px">|</span>
<span class="c p" style="left:183.1px;top:569.25px">|</span>
<span class="c p" style="left:200.7px;top:569.25px">|</span>
<span class="c p" style="left:218.2px;top:569.25px">|</span>
<span class="c p" style="left:235.8px;top:569.25px">|</span>
<span class="c p" style="left:253.4px;top:569.25px">|</span>
<span class="c p" style="left:270.9px;top:569.25px">|</span>
<span class="c p" style="left:288.6px;top:569.25px">|</span>
<span class="c p" style="left:306.2px;top:569.25px">|</span>
<span class="c p" style="left:323.6px;top:569.25px">|</span>
<span class="c p" style="left:341.1px;top:569.25px">|</span>
<span class="c p" style="left:358.4px;top:569.25px">|</span>
<span class="c" style="left:373.1px;top:569.25px">...</span>
<span class="c" style="left:403.8px;top:569.25px">1</span>
<span class="c" style="left:461.7px;top:569.25px">24</span>
<span class="c" style="left:524.9px;top:569.25px">23</span>
<span class="c" style="left:583.6px;top:569.25px">Compute Scalar</span>
<span class="c" style="left:697.2px;top:569.25px">Compute Scalar</span>
<span class="c" style="left:810.9px;top:569.25px">DEFINE:([Expr1022]=CONVERT(bit,[master].[sys].[sysdbreg].[...</span>
<span class="c" style="left:1208.5px;top:569.25px">[Expr1022]=CONVERT(bit,[master].[sys].[sysdbreg]</span>
<div class="sb" style="left:1451.5px;top:0;width:40px;height:700px"></div>
<svg style="position:absolute;left:1455px;top:7px" width="13" height="8"><polygon points="0.90,7.00 12.70,7.00 6.80,0.40" fill="#868999"/></svg>
<div style="left:1456.5px;top:21.8px;width:11px;height:272.8px;background:#cfd0d7"></div>
<svg style="position:absolute;left:1455px;top:565px" width="13" height="7"><polygon points="0.90,0.00 12.70,0.00 6.80,6.60" fill="#868999"/></svg>
<div class="sb" style="left:0;top:579.0px;width:1600px;height:9px;overflow:hidden">
<div style="left:21.4px;top:5.2px;width:738.4px;height:10.6px;background:#cfd0d7"></div>
<svg style="position:absolute;left:7px;top:4px" width="7" height="13"><polygon points="6.80,0.90 6.80,12.50 0.40,6.70" fill="#868999"/></svg>
<svg style="position:absolute;left:1437px;top:4px" width="7" height="13"><polygon points="0.60,0.90 0.60,12.50 7.00,6.70" fill="#868999"/></svg>
</div>
</div>
<div style="left:8px;top:801px;width:1474px;height:2px;background:#fcfcfc"></div>
</body></html>
